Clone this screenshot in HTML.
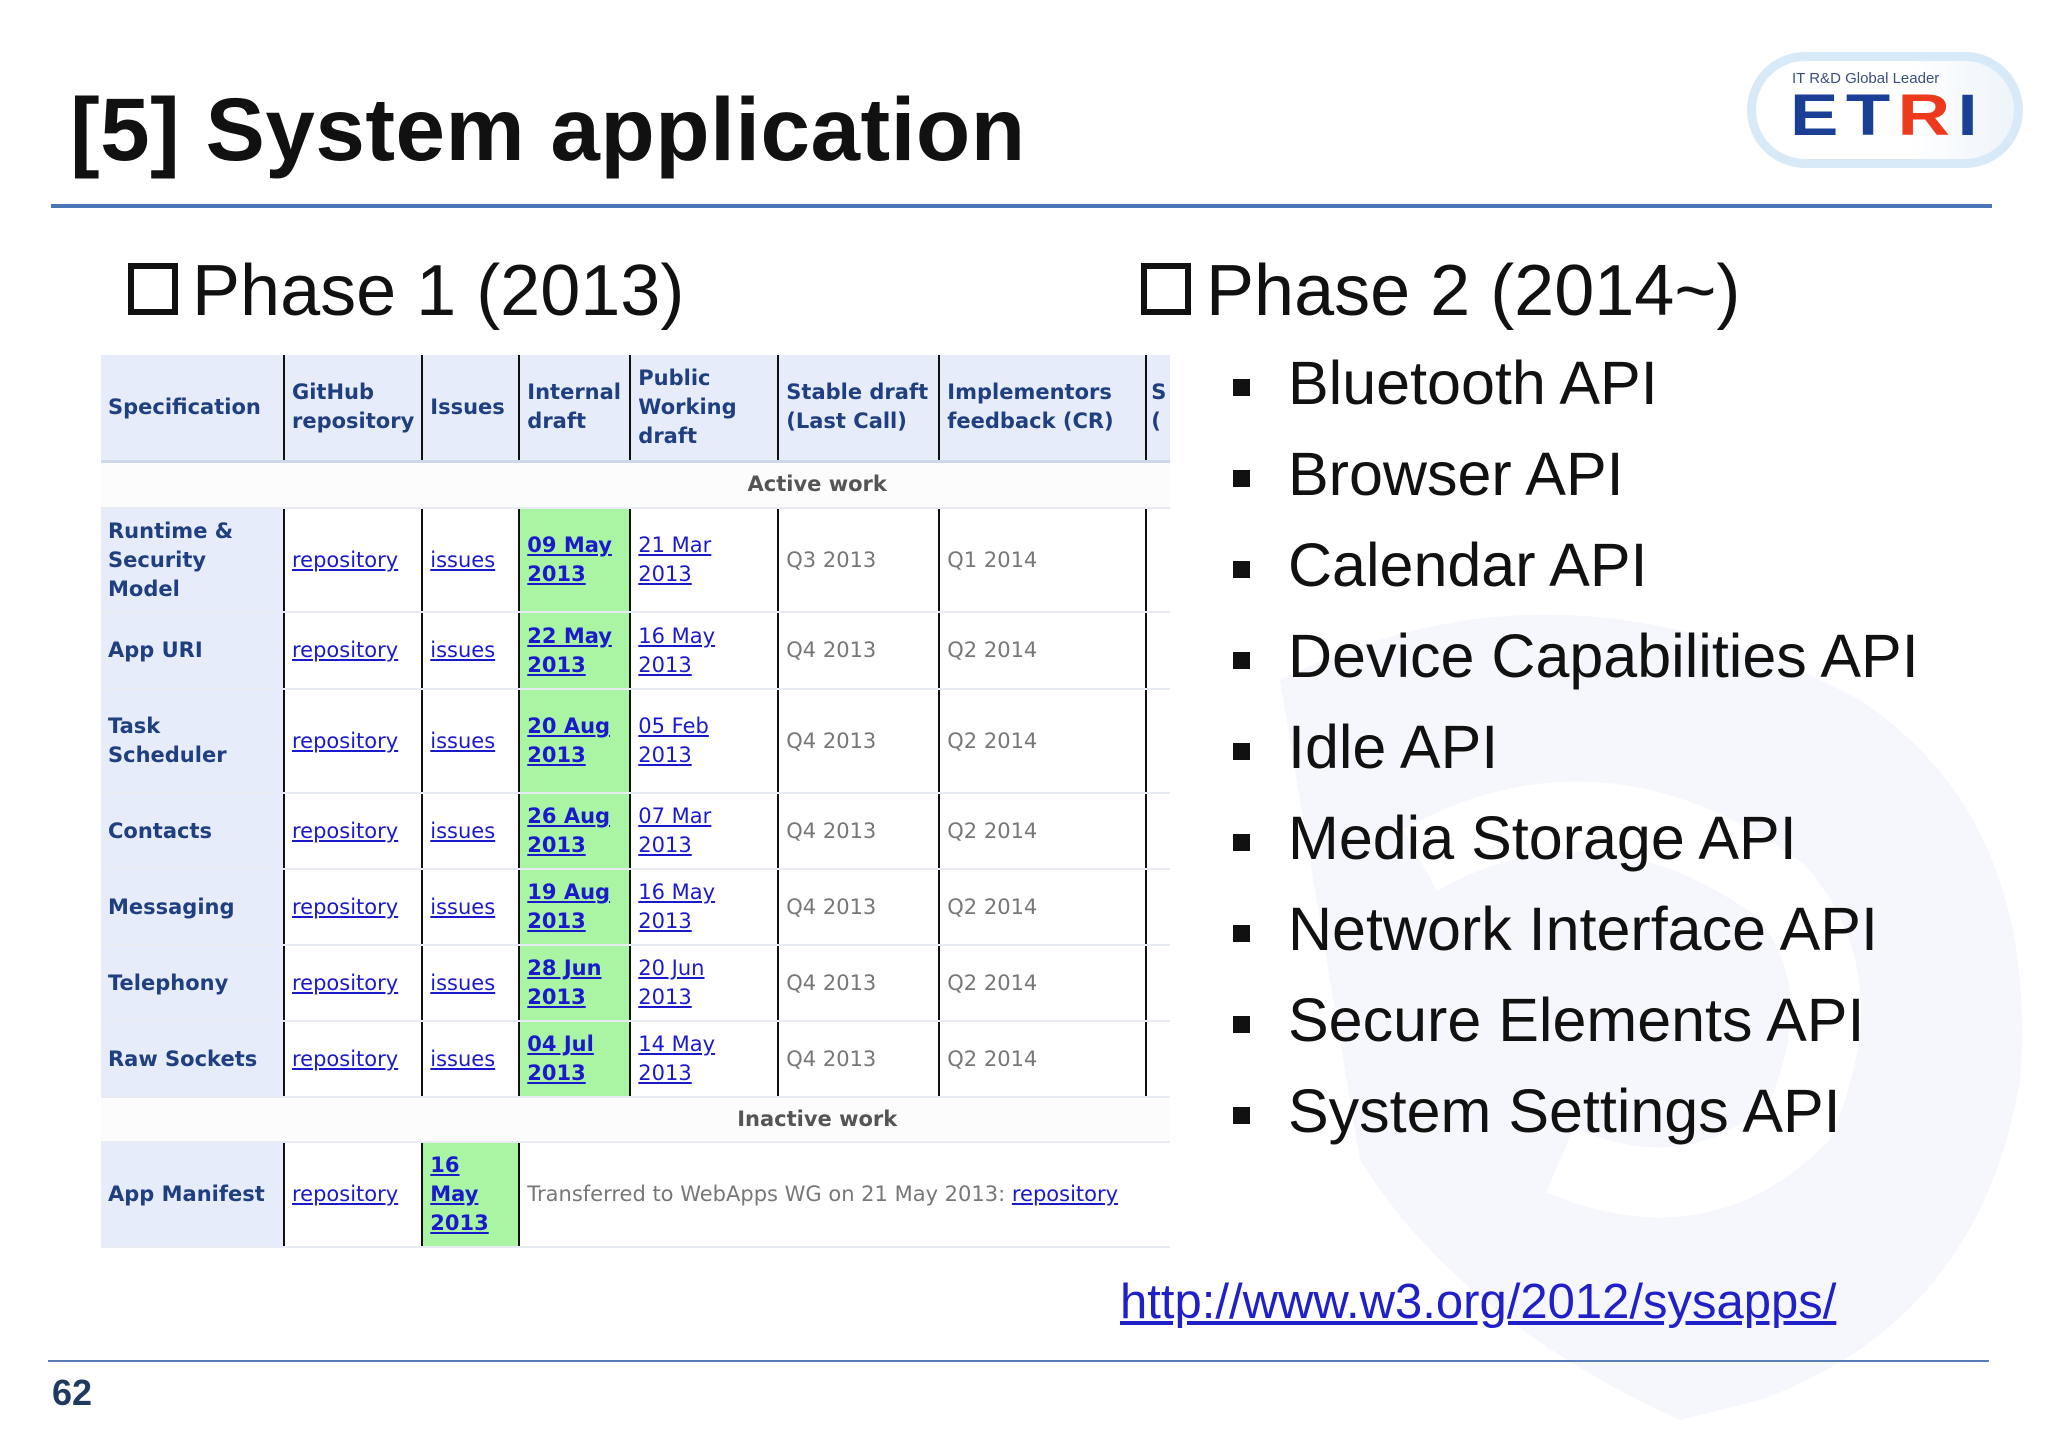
<!DOCTYPE html>
<html><head><meta charset="utf-8"><style>
*{margin:0;padding:0;box-sizing:border-box}
body{width:2048px;height:1448px;background:#fff;position:relative;overflow:hidden;font-family:"Liberation Sans",sans-serif}
.abs{position:absolute;white-space:nowrap}
#title{left:70px;top:78px;font-size:89px;font-weight:bold;color:#111;letter-spacing:0.5px}
.hline{position:absolute;background:#4a76b8}
.phase{font-size:72px;color:#111;top:250px}
.box{position:absolute;width:50px;height:52px;border:6px solid #111}
.bul{position:absolute;left:1233px;width:17px;height:17px;background:#111}
.bt{position:absolute;left:1288px;font-size:61px;color:#111;white-space:nowrap;line-height:1}
table{position:absolute;left:101px;top:355px;border-collapse:collapse;table-layout:fixed;font-family:"DejaVu Sans",sans-serif;font-size:21px}
td{vertical-align:middle;padding:0 7px;line-height:29px;border-left:2px solid #111;border-bottom:2px solid #e8ecf2;overflow:hidden;white-space:nowrap}
td:first-child{border-left:none}
.h td{background:#e6ecf9;color:#1f3f80;font-weight:bold;border-bottom:3px solid #cfd8e8}
.sp{background:#e6ecf9;color:#1f3f80;font-weight:bold}
a{color:#1a1acc;text-decoration:underline}
.g{background:#a9f5a4}
.g a{font-weight:bold}
.gr{color:#777}
.sec td{border-left:none;text-align:center;color:#555;font-weight:bold;background:#fcfcfc;padding-left:370px}
</style></head><body>
<svg class="abs" style="left:1160px;top:560px" width="880" height="860"><path d="M120 120 Q400 -20 700 140 Q880 260 860 520 Q820 760 600 840 L520 860 Q300 760 200 600 Z" fill="#f6f7fc"/><path d="M260 300 Q440 200 620 330 Q700 420 640 560 Q540 660 400 600" fill="none" stroke="#fff" stroke-width="70"/></svg>
<div id="title" class="abs">[5] System application</div>
<div class="hline" style="left:51px;top:204px;width:1941px;height:4px"></div>
<div class="abs" style="left:1747px;top:52px;width:276px;height:116px;border-radius:58px;border:9px solid #d8eaf8;background:linear-gradient(90deg,#fff 60%,#eef4fa)"></div>
<div class="abs" style="left:1792px;top:70px;font-size:15px;color:#3a4f80">IT R&amp;D Global Leader</div>
<div class="abs" style="left:1790px;top:86px;font-size:58px;font-weight:900;color:#1b3f95;letter-spacing:6px;transform:scaleX(1.25);transform-origin:left;line-height:60px">ET<span style="color:#ee3a1c">R</span>I</div>
<div class="box" style="left:128px;top:263px"></div>
<div class="abs phase" style="left:192px">Phase 1 (2013)</div>
<div class="box" style="left:1141px;top:263px"></div>
<div class="abs phase" style="left:1206px">Phase 2 (2014~)</div>
<table>
<colgroup><col style="width:183px"><col style="width:138px"><col style="width:97px"><col style="width:111px"><col style="width:148px"><col style="width:161px"><col style="width:207px"><col style="width:10px"></colgroup>
<tr class="h" style="height:106px"><td>Specification</td><td>GitHub<br>repository</td><td>Issues</td><td>Internal<br>draft</td><td>Public<br>Working<br>draft</td><td>Stable draft<br>(Last Call)</td><td>Implementors<br>feedback (CR)</td><td style="padding:0 4px">S<br>(</td></tr>
<tr class="sec" style="height:47px"><td colspan="8">Active work</td></tr>
<tr style="height:104px"><td class="sp">Runtime &amp;<br>Security<br>Model</td><td><a>repository</a></td><td><a>issues</a></td><td class="g"><a>09 May<br>2013</a></td><td><a>21 Mar<br>2013</a></td><td class="gr">Q3 2013</td><td class="gr">Q1 2014</td><td style="border-left:2px solid #111"></td></tr>
<tr style="height:77px"><td class="sp">App URI</td><td><a>repository</a></td><td><a>issues</a></td><td class="g"><a>22 May<br>2013</a></td><td><a>16 May<br>2013</a></td><td class="gr">Q4 2013</td><td class="gr">Q2 2014</td><td></td></tr>
<tr style="height:104px"><td class="sp">Task<br>Scheduler</td><td><a>repository</a></td><td><a>issues</a></td><td class="g"><a>20 Aug<br>2013</a></td><td><a>05 Feb<br>2013</a></td><td class="gr">Q4 2013</td><td class="gr">Q2 2014</td><td></td></tr>
<tr style="height:76px"><td class="sp">Contacts</td><td><a>repository</a></td><td><a>issues</a></td><td class="g"><a>26 Aug<br>2013</a></td><td><a>07 Mar<br>2013</a></td><td class="gr">Q4 2013</td><td class="gr">Q2 2014</td><td></td></tr>
<tr style="height:76px"><td class="sp">Messaging</td><td><a>repository</a></td><td><a>issues</a></td><td class="g"><a>19 Aug<br>2013</a></td><td><a>16 May<br>2013</a></td><td class="gr">Q4 2013</td><td class="gr">Q2 2014</td><td></td></tr>
<tr style="height:76px"><td class="sp">Telephony</td><td><a>repository</a></td><td><a>issues</a></td><td class="g"><a>28 Jun<br>2013</a></td><td><a>20 Jun<br>2013</a></td><td class="gr">Q4 2013</td><td class="gr">Q2 2014</td><td></td></tr>
<tr style="height:76px"><td class="sp">Raw Sockets</td><td><a>repository</a></td><td><a>issues</a></td><td class="g"><a>04 Jul<br>2013</a></td><td><a>14 May<br>2013</a></td><td class="gr">Q4 2013</td><td class="gr">Q2 2014</td><td></td></tr>
<tr class="sec" style="height:45px"><td colspan="8">Inactive work</td></tr>
<tr style="height:105px"><td class="sp">App Manifest</td><td><a>repository</a></td><td class="g"><a>16<br>May<br>2013</a></td><td colspan="5" class="gr">Transferred to WebApps WG on 21 May 2013: <a>repository</a></td></tr>
</table>
<div class="bul" style="top:379px"></div><div class="bt" style="top:353px">Bluetooth API</div>
<div class="bul" style="top:470px"></div><div class="bt" style="top:444px">Browser API</div>
<div class="bul" style="top:561px"></div><div class="bt" style="top:535px">Calendar API</div>
<div class="bul" style="top:652px"></div><div class="bt" style="top:626px">Device Capabilities API</div>
<div class="bul" style="top:743px"></div><div class="bt" style="top:717px">Idle API</div>
<div class="bul" style="top:834px"></div><div class="bt" style="top:808px">Media Storage API</div>
<div class="bul" style="top:925px"></div><div class="bt" style="top:899px">Network Interface API</div>
<div class="bul" style="top:1016px"></div><div class="bt" style="top:990px">Secure Elements API</div>
<div class="bul" style="top:1107px"></div><div class="bt" style="top:1081px">System Settings API</div>
<div class="abs" style="left:1120px;top:1274px;font-size:49px;color:#2020c8;text-decoration:underline">http://www.w3.org/2012/sysapps/</div>
<div class="hline" style="left:48px;top:1360px;width:1941px;height:2px;background:#5a7fb8"></div>
<div class="abs" style="left:52px;top:1372px;font-size:36px;font-weight:bold;color:#1f3a5f">62</div>
</body></html>
